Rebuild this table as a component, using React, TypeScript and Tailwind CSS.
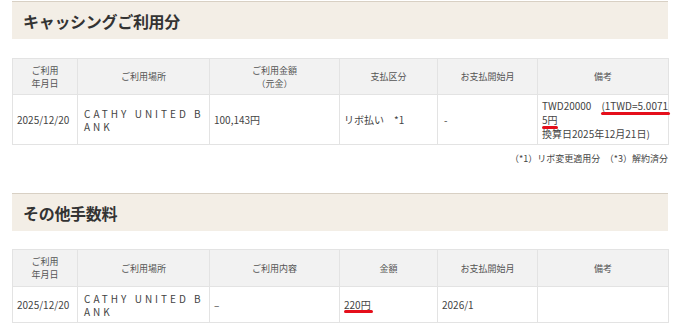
import React from "react";

const font = { fontFamily: '"Noto Sans CJK JP", "Noto Sans", sans-serif' };

function Mark({ children, extend = 0 }: { children: React.ReactNode; extend?: number }) {
  return (
    <span className="relative inline-block">
      {children}
      <span
        className="absolute left-0 top-[calc(100%-1px)] h-[3px] rounded-full bg-[#e50f1b]"
        style={{ right: -extend }}
      />
    </span>
  );
}

function SectionTitle({ children }: { children: React.ReactNode }) {
  return (
    <div className="flex h-[38px] items-center border-t border-[#d8d0c4] bg-[#f3eee6] pl-[11px]">
      <h2 className="text-[16px] font-bold leading-none tracking-[-0.3px] text-[#333]">{children}</h2>
    </div>
  );
}

const th =
  "border border-[#e3e3e3] bg-[#f2f2f2] px-[4px] text-center align-middle text-[9px] font-normal leading-[13px] text-[#555]";
const td = "border border-[#e3e3e3] bg-white px-[4px] align-middle text-[10px] leading-[13px] text-[#444]";

function Place() {
  return (
    <td className={td + " pl-[6px] text-[9.5px] leading-[13px] tracking-[3px]"}>
      <div className="whitespace-nowrap">CATHY UNITED B</div>
      <div>ANK</div>
    </td>
  );
}

function Cols() {
  return (
    <colgroup>
      <col className="w-[65px]" />
      <col className="w-[132px]" />
      <col className="w-[130px]" />
      <col className="w-[98px]" />
      <col className="w-[100px]" />
      <col className="w-[131px]" />
    </colgroup>
  );
}

export default function App() {
  return (
    <div className="w-[680px] bg-white px-[12px] pt-px" style={font}>
      <SectionTitle>キャッシングご利用分</SectionTitle>

      <table className="mt-[19px] w-[656px] table-fixed border-collapse">
        <Cols />
        <thead>
          <tr className="h-[36px]">
            <th className={th}>
              ご利用
              <br />
              年月日
            </th>
            <th className={th}>ご利用場所</th>
            <th className={th}>
              ご利用金額
              <br />
              （元金）
            </th>
            <th className={th}>支払区分</th>
            <th className={th}>お支払開始月</th>
            <th className={th}>備考</th>
          </tr>
        </thead>
        <tbody>
          <tr className="h-[50px]">
            <td className={td}>2025/12/20</td>
            <Place />
            <td className={td}>100,143円</td>
            <td className={td}>リボ払い　*1</td>
            <td className={td + " pl-[6px]"}>-</td>
            <td className={td + " leading-[14px]"}>
              <div className="whitespace-nowrap">
                TWD20000　<Mark extend={2}>(1TWD=5.0071</Mark>
              </div>
              <div>
                <Mark>5円</Mark>
              </div>
              <div className="whitespace-nowrap">換算日2025年12月21日)</div>
            </td>
          </tr>
        </tbody>
      </table>

      <p className="mt-[7px] text-right text-[9px] leading-[14px] text-[#444]">
        （*1）リボ変更適用分　（*3）解約済分
      </p>

      <div className="mt-[27px]">
        <SectionTitle>その他手数料</SectionTitle>
      </div>

      <table className="mt-[18px] w-[656px] table-fixed border-collapse">
        <Cols />
        <thead>
          <tr className="h-[37px]">
            <th className={th}>
              ご利用
              <br />
              年月日
            </th>
            <th className={th}>ご利用場所</th>
            <th className={th}>ご利用内容</th>
            <th className={th}>金額</th>
            <th className={th}>お支払開始月</th>
            <th className={th}>備考</th>
          </tr>
        </thead>
        <tbody>
          <tr className="h-[36px]">
            <td className={td}>2025/12/20</td>
            <Place />
            <td className={td}>–</td>
            <td className={td}>
              <Mark extend={2}>220円</Mark>
            </td>
            <td className={td}>2026/1</td>
            <td className={td}></td>
          </tr>
        </tbody>
      </table>
      <div className="h-[6px]" />
    </div>
  );
}
